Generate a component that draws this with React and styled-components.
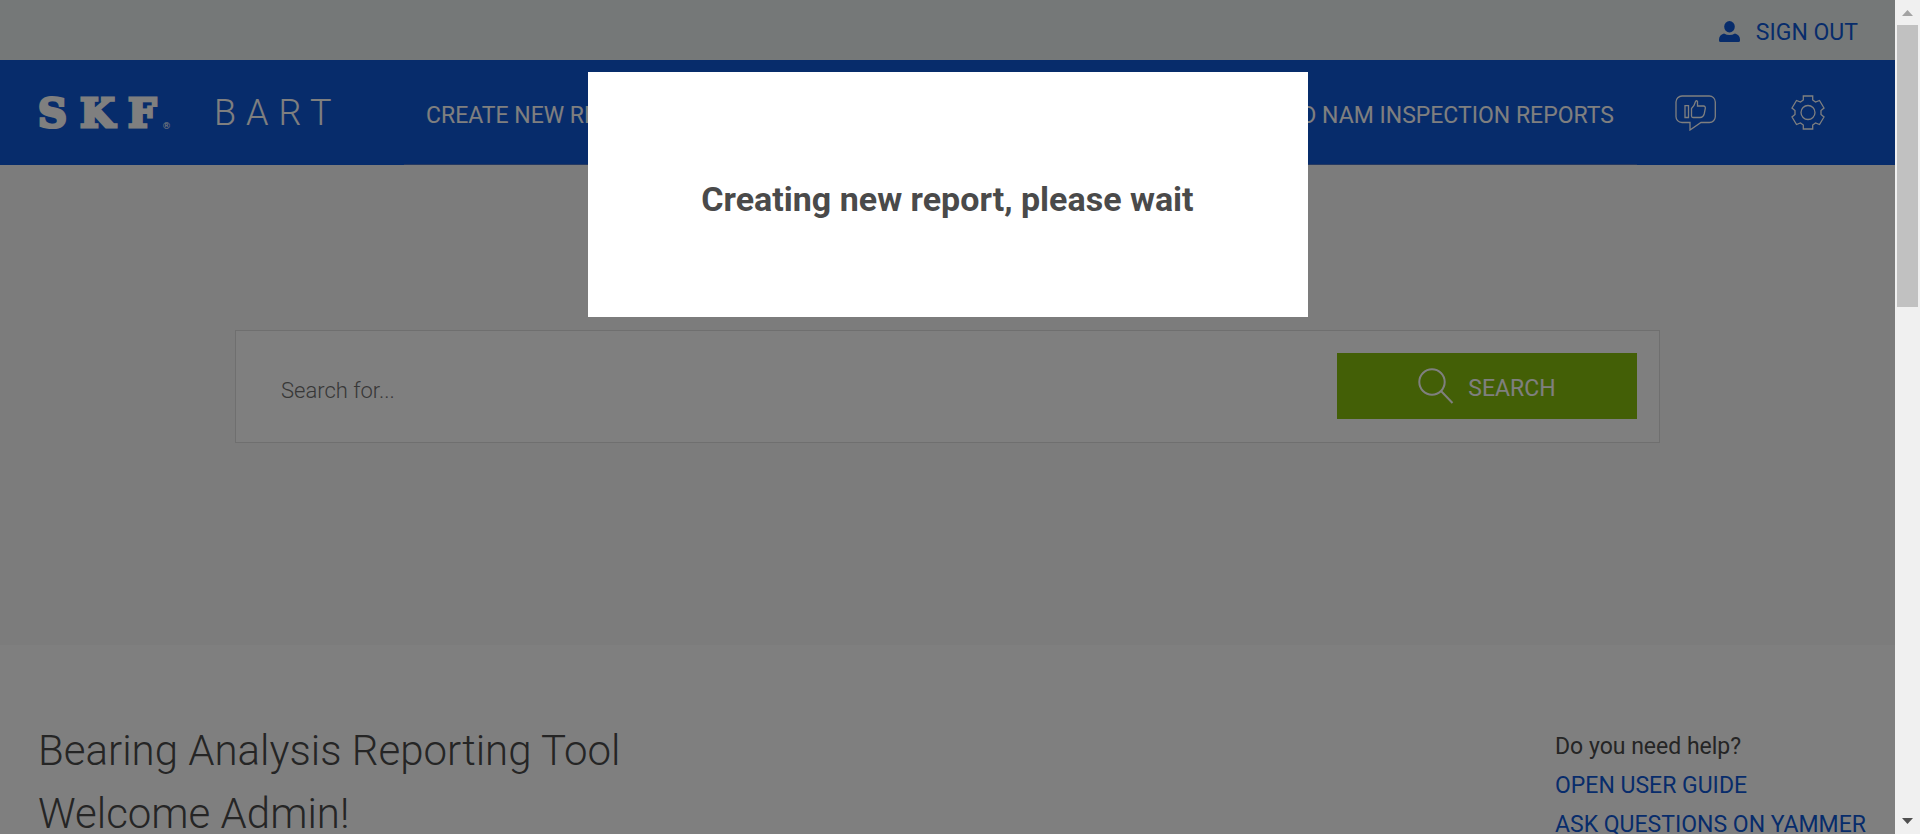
import React from "react";
import styled, { createGlobalStyle } from "styled-components";

const GlobalStyle = createGlobalStyle`
  * { box-sizing: border-box; }
  body { margin: 0; background: #fff; color: #4a4a4a; font-family: Roboto, "Liberation Sans", sans-serif; }
  h1, h2, p { margin: 0; }
  a { color: inherit; text-decoration: none; }
  button { font: inherit; border: 0; cursor: pointer; }
`;

const Window = styled.div`
  display: flex;
  height: 100vh;
  overflow: hidden;
`;

const Page = styled.div`
  position: relative;
  flex: 1;
  min-width: 0;
  overflow: hidden;
`;

const TopBar = styled.div`
  display: flex;
  justify-content: flex-end;
  align-items: center;
  height: 60px;
  padding: 6px 37px 0 0;
  background: #eaf1f1;
`;

const SignOut = styled.button`
  display: flex;
  align-items: center;
  gap: 16px;
  padding: 0;
  background: none;
  color: #0f58d6;
  font-size: 23px;
  line-height: 28px;

  svg { margin-bottom: 4px; }
`;

const Header = styled.header`
  display: flex;
  align-items: stretch;
  height: 105px;
  padding-left: 38px;
  background: #0f58d6;
  color: #fff;
`;

const Brand = styled.a`
  display: flex;
  align-items: center;
  flex: none;
  width: 366px;
`;

const Product = styled.span`
  margin-left: 36px;
  font-size: 36px;
  font-weight: 300;
  letter-spacing: 10px;
`;

const Nav = styled.nav`
  display: flex;
  justify-content: space-between;
  align-items: center;
  flex: 1;
  padding: 6px 23px 0 22px;
  border-bottom: 1px solid #4a72c4;
  font-size: 23px;
  white-space: nowrap;
`;

const HeaderTools = styled.div`
  display: flex;
  align-items: center;
  justify-content: space-between;
  flex: none;
  width: 258px;
  padding: 0 70px 0 38px;
`;

const IconButton = styled.button`
  display: flex;
  padding: 0;
  background: none;
  color: inherit;
`;

const SearchSection = styled.section`
  height: 480px;
  padding: 165px 235px 0;
  background: #f8f8f8;
`;

const SearchForm = styled.form`
  display: flex;
  align-items: flex-start;
  height: 113px;
  padding: 22px 22px 0 45px;
  border: 1px solid #dedede;
  background: #fff;
`;

const SearchInput = styled.input`
  flex: 1;
  min-width: 0;
  height: 66px;
  padding: 8px 0 0;
  border: 0;
  outline: 0;
  background: none;
  font: 300 22px Roboto, "Liberation Sans", sans-serif;

  &::placeholder { color: #6f6f6f; opacity: 1; }
`;

const SearchButton = styled.button`
  display: flex;
  align-items: center;
  justify-content: center;
  gap: 14px;
  width: 300px;
  height: 66px;
  background: #86be0c;
  color: #fff;
  font-size: 23px;

  span { padding-top: 4px; }
`;

const Intro = styled.main`
  display: flex;
  justify-content: space-between;
  align-items: flex-start;
  padding: 74px 38px 0;
`;

const Title = styled.h1`
  font-size: 42px;
  font-weight: 300;
  line-height: 63px;
`;

const Help = styled.aside`
  width: 302px;
  padding-top: 8px;
  font-size: 23px;
  line-height: 39px;
  white-space: nowrap;

  a { display: block; color: #0f58d6; }
`;

const Overlay = styled.div`
  position: absolute;
  inset: 0;
  display: flex;
  justify-content: center;
  align-items: flex-start;
  padding-top: 72px;
  background: rgba(0, 0, 0, 0.5);
`;

const Dialog = styled.div`
  display: flex;
  justify-content: center;
  align-items: center;
  width: 720px;
  height: 245px;
  padding-top: 8px;
  background: #fff;
`;

const DialogTitle = styled.h2`
  font-size: 34px;
  font-weight: 700;
  line-height: 40px;
`;

const ScrollTrack = styled.div`
  display: flex;
  flex-direction: column;
  align-items: center;
  flex: none;
  width: 25px;
  padding: 10px 2px;
  background: #f0f0f0;
`;

const ScrollThumb = styled.div`
  width: 21px;
  height: 282px;
  margin: 9px 0 auto;
  background: #c1c1c1;
`;

const Logo = () => (
  <svg width="140" height="40" viewBox="0 0 140 40" role="img" aria-label="SKF">
    <text x="0 42 90" y="34" fill="#fff" stroke="#fff" strokeWidth="3" fontFamily="'DejaVu Serif', serif" fontWeight="700" fontSize="40">SKF</text>
    <text x="124" y="36" fill="#fff" fontFamily="'DejaVu Sans', sans-serif" fontSize="9">®</text>
  </svg>
);

const UserIcon = () => (
  <svg width="21" height="21" viewBox="0 0 21 21" fill="currentColor" aria-hidden="true">
    <ellipse cx="10.5" cy="5.7" rx="5.3" ry="5.7" />
    <path d="M5 12.5Q10.5 15.5 16 12.5Q21 14 21 18.5V19.5Q21 21 19.5 21H1.500Q0 21 0 19.500V18.500Q0 14 5 12.500Z" />
  </svg>
);

const FeedbackIcon = () => (
  <svg width="42" height="36" viewBox="0 0 42 36" fill="none" stroke="currentColor" strokeWidth="1.3" aria-hidden="true">
    <path d="M7 1H34A6 6 0 0 1 40.300 7V21A6 6 0 0 1 34 27.500H26L15 35V27.500H7A6 6 0 0 1 1 21V7A6 6 0 0 1 7 1Z" />
    <path d="M10 10.700H13.500V22.500H10ZM16.500 21V13.500L19 10.500L20.500 6.500Q21.500 5 22.500 6.500V11H28.500Q30.500 11 30.300 13.500L29.300 18.500Q28.300 22.500 25 22.500H18Q16.500 22.500 16.500 21Z" />
  </svg>
);

const GearIcon = () => (
  <svg width="34" height="35" viewBox="0 0 34 35" fill="none" stroke="currentColor" strokeWidth="1.3" aria-hidden="true">
    <path d="M12.300 1H21.700V5L24.500 7L28.500 5.500L33 13L30 15.500V19.500L33 22L28.500 29.500L24.500 28L21.700 30V34H12.300V30L9.500 28L5.500 29.500L1 22L4 19.500V15.500L1 13L5.500 5.500L9.500 7L12.300 5Z" />
    <circle cx="17" cy="17.500" r="7" />
  </svg>
);

const SearchIcon = () => (
  <svg width="36" height="36" viewBox="0 0 36 36" fill="none" stroke="currentColor" strokeWidth="2" aria-hidden="true">
    <circle cx="14" cy="14" r="12.700" />
    <path d="M23 23L34.500 35" />
  </svg>
);

const Arrow = ({ down }) => (
  <svg width="11" height="6" viewBox="0 0 11 6" aria-hidden="true">
    <path d={down ? "M0 0H11L5.500 6Z" : "M0 6H11L5.500 0Z"} fill={down ? "#505050" : "#a3a3a3"} />
  </svg>
);

export default function App() {
  return (
    <>
      <GlobalStyle />
      <Window>
        <Page>
          <TopBar>
            <SignOut type="button"><UserIcon />SIGN OUT</SignOut>
          </TopBar>
          <Header>
            <Brand href="#"><Logo /><Product>BART</Product></Brand>
            <Nav>
              <a href="#create">CREATE NEW REPORT</a>
              <a href="#nam">OLD NAM INSPECTION REPORTS</a>
            </Nav>
            <HeaderTools>
              <IconButton type="button" aria-label="Feedback"><FeedbackIcon /></IconButton>
              <IconButton type="button" aria-label="Settings"><GearIcon /></IconButton>
            </HeaderTools>
          </Header>
          <SearchSection>
            <SearchForm>
              <SearchInput type="text" aria-label="Search" placeholder="Search for..." />
              <SearchButton type="button"><SearchIcon /><span>SEARCH</span></SearchButton>
            </SearchForm>
          </SearchSection>
          <Intro>
            <Title>Bearing Analysis Reporting Tool<br />Welcome Admin!</Title>
            <Help>
              <p>Do you need help?</p>
              <a href="#guide">OPEN USER GUIDE</a>
              <a href="#yammer">ASK QUESTIONS ON YAMMER</a>
            </Help>
          </Intro>
          <Overlay>
            <Dialog role="dialog" aria-modal="true" aria-labelledby="dialog-title">
              <DialogTitle id="dialog-title">Creating new report, please wait</DialogTitle>
            </Dialog>
          </Overlay>
        </Page>
        <ScrollTrack aria-hidden="true">
          <Arrow />
          <ScrollThumb />
          <Arrow down />
        </ScrollTrack>
      </Window>
    </>
  );
}
